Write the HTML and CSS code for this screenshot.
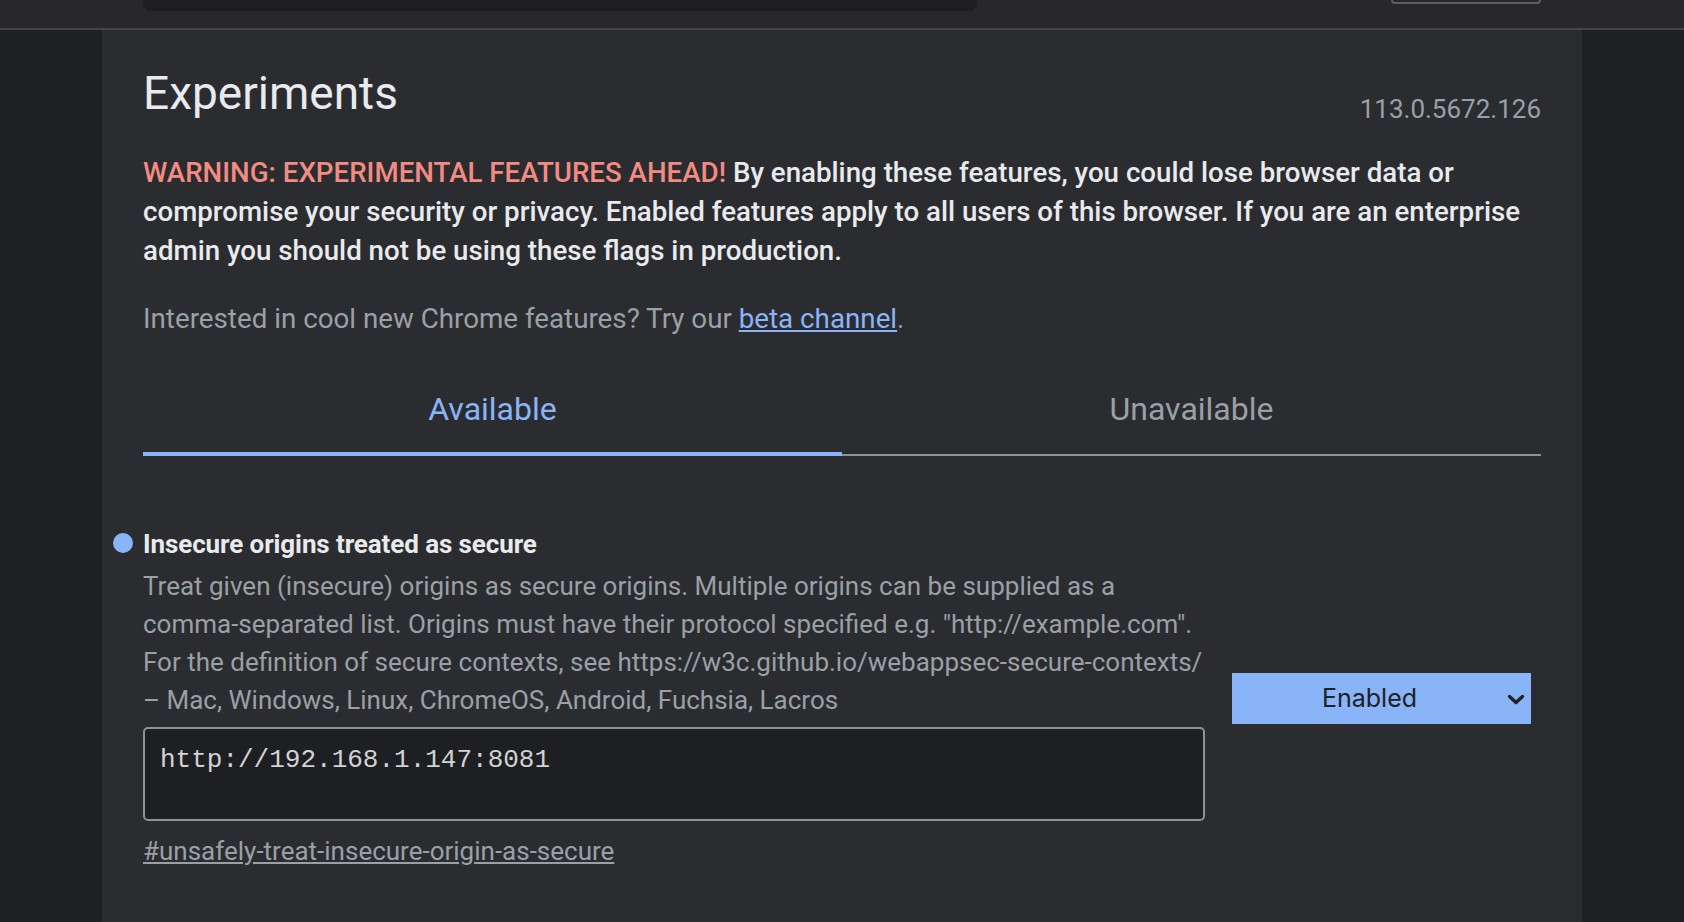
FILE: index.html
```html
<!DOCTYPE html>
<html lang="en">
<head>
<meta charset="utf-8">
<title>Experiments</title>
<link rel="stylesheet" href="styles.css">
</head>
<body>
<header class="topbar">
  <div class="topbar-inner">
    <div class="search"></div>
    <div class="reset-btn"></div>
  </div>
</header>
<main class="panel">
  <div class="title-row">
    <h1 class="title">Experiments</h1>
    <span class="version">113.0.5672.126</span>
  </div>
  <p class="warning"><span class="warning-label">WARNING: EXPERIMENTAL FEATURES AHEAD!</span> By enabling these features, you could lose browser data or<br>compromise your security or privacy. Enabled features apply to all users of this browser. If you are an enterprise<br>admin you should not be using these flags in production.</p>
  <p class="promo">Interested in cool new Chrome features? Try our <a href="#" class="blue-link">beta channel</a>.</p>
  <div class="tabs">
    <div class="tab tab-active">Available</div>
    <div class="tab">Unavailable</div>
  </div>
  <div class="flag">
    <div class="flag-main">
      <h2 class="flag-name"><span class="dot"></span>Insecure origins treated as secure</h2>
      <p class="flag-desc">Treat given (insecure) origins as secure origins. Multiple origins can be supplied as a<br>comma-separated list. Origins must have their protocol specified e.g. "http://example.com".<br>For the definition of secure contexts, see https://w3c.github.io/webappsec-secure-contexts/<br>– Mac, Windows, Linux, ChromeOS, Android, Fuchsia, Lacros</p>
      <textarea class="origins" spellcheck="false">http://192.168.1.147:8081</textarea>
      <a href="#" class="permalink">#unsafely-treat-insecure-origin-as-secure</a>
    </div>
    <div class="flag-actions">
      <div class="select-wrap">
        <select class="state">
          <option>Default</option>
          <option selected>Enabled</option>
          <option>Disabled</option>
        </select>
        <svg class="chev" width="18" height="11" viewBox="0 0 18 11"><path d="M2.5 2.5 L9 8.5 L15.5 2.5" fill="none" stroke="#202124" stroke-width="3.4" stroke-linecap="round" stroke-linejoin="round"/></svg>
      </div>
    </div>
  </div>
</main>
</body>
</html>
```

FILE: styles.css
```css
* { box-sizing: border-box; }

html, body {
  margin: 0;
  padding: 0;
}

body {
  background: #1f2023;
  font-family: Roboto, "Noto Sans", sans-serif;
  color: #e8eaed;
  width: 1684px;
  height: 922px;
  overflow: hidden;
}

.topbar {
  height: 30px;
  background: #28282c;
  border-bottom: 2px solid #46464a;
}

.topbar-inner {
  width: 1398px;
  margin: 0 auto;
  display: flex;
  justify-content: space-between;
  align-items: flex-start;
}

.search {
  width: 834px;
  height: 11px;
  background: #1e1e20;
  border-radius: 0 0 8px 8px;
}

.reset-btn {
  width: 150px;
  height: 4px;
  border: 2px solid #5d5e62;
  border-top: none;
  border-radius: 0 0 4px 4px;
}

.panel {
  width: 1480px;
  min-height: 892px;
  margin: 0 auto;
  background: #2b2c2f;
  padding: 36px 41px 0;
}

.title-row {
  display: flex;
  justify-content: space-between;
  align-items: flex-start;
}

.title {
  margin: 0;
  font-size: 46px;
  line-height: 54px;
  font-weight: 400;
  color: #e8eaed;
}

.version {
  margin-top: 28px;
  font-size: 26px;
  line-height: 30px;
  color: #9aa0a6;
}

.warning {
  margin: 29px 0 0;
  font-size: 27.7px;
  line-height: 39px;
  font-weight: 500;
  color: #e8eaed;
  white-space: nowrap;
}

.warning-label {
  color: #f28b82;
}

.promo {
  margin: 29px 0 0;
  font-size: 27.75px;
  line-height: 39px;
  color: #9aa0a6;
}

.blue-link {
  color: #8ab4f8;
  text-decoration: underline;
}

.tabs {
  margin-top: 51px;
  display: grid;
  grid-template-columns: 1fr 1fr;
  box-shadow: inset 0 -2px 0 #8e9196;
}

.tab {
  text-align: center;
  font-size: 32px;
  line-height: 40px;
  padding-bottom: 27px;
  color: #9aa0a6;
}

.tab-active {
  color: #8ab4f8;
  box-shadow: inset 0 -4px 0 #8ab4f8;
}

.flag {
  margin-top: 69px;
  display: flex;
  align-items: center;
}

.flag-main {
  width: 1062px;
  flex: none;
}

.flag-name {
  position: relative;
  margin: 0;
  font-size: 26px;
  line-height: 39px;
  font-weight: 700;
  letter-spacing: -0.1px;
  color: #e8eaed;
}

.dot {
  position: absolute;
  left: -30px;
  top: 8px;
  width: 20px;
  height: 20px;
  border-radius: 50%;
  background: #8ab4f8;
}

.flag-desc {
  margin: 3px 0 0;
  font-size: 26px;
  line-height: 38px;
  color: #9aa0a6;
  white-space: nowrap;
}

.origins {
  display: block;
  width: 1062px;
  height: 94px;
  margin-top: 8px;
  padding: 16px 15px;
  background: #1e1f22;
  border: 2px solid #8e9196;
  border-radius: 5px;
  color: #d2d3d5;
  font-family: "Liberation Mono", "DejaVu Sans Mono", monospace;
  font-size: 26px;
  line-height: 30px;
  resize: none;
  outline: none;
}

.permalink {
  display: inline-block;
  margin-top: 11px;
  font-size: 26px;
  line-height: 39px;
  color: #9aa0a6;
  text-decoration: underline;
}

.flag-actions {
  margin-left: 27px;
  width: 299px;
  flex: none;
}

.select-wrap {
  position: relative;
  width: 299px;
  height: 51px;
}

.state {
  appearance: none;
  -webkit-appearance: none;
  width: 299px;
  height: 51px;
  border: none;
  border-radius: 0;
  background: #8ab4f8;
  color: #202124;
  font-family: Inter, "Liberation Sans", sans-serif;
  font-size: 25px;
  padding: 0 24px 0 0;
  text-align: center;
  text-align-last: center;
  outline: none;
}

.chev {
  position: absolute;
  right: 6px;
  top: 21px;
  pointer-events: none;
}
```
